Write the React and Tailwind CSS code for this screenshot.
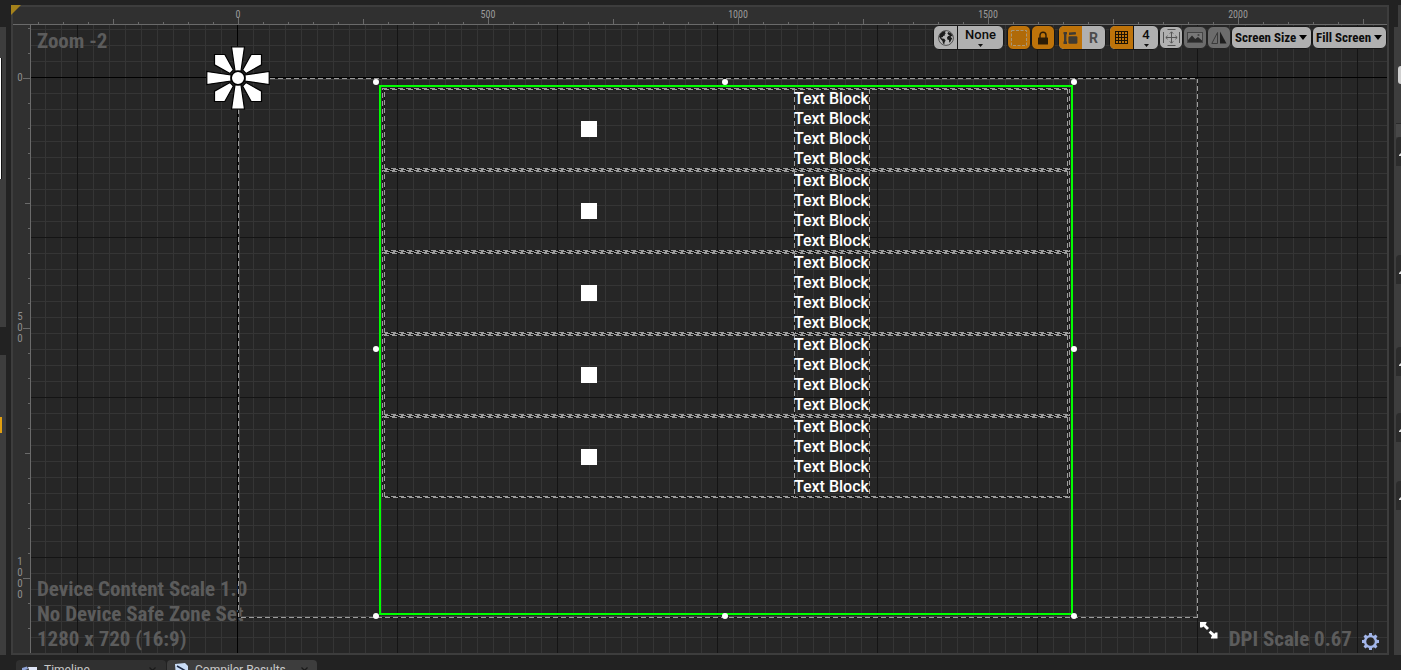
import { useLayoutEffect, useRef, useState } from "react";

const DASHED =
  "bg-[repeating-linear-gradient(90deg,#9c9c9c_0_5px,#161616_5px_8px),repeating-linear-gradient(-90deg,#9c9c9c_0_5px,#161616_5px_8px),repeating-linear-gradient(0deg,#9c9c9c_0_5px,#161616_5px_8px),repeating-linear-gradient(180deg,#9c9c9c_0_5px,#161616_5px_8px)] bg-[length:100%_1px,100%_1px,1px_100%,1px_100%] bg-[position:0_0,0_100%,0_0,100%_0] bg-no-repeat";
const DASHED_SIDES =
  "bg-[repeating-linear-gradient(180deg,#9c9c9c_0_5px,#161616_5px_8px),repeating-linear-gradient(180deg,#9c9c9c_0_5px,#161616_5px_8px)] bg-[length:1px_100%,1px_100%] bg-[position:0_0,100%_0] bg-no-repeat";
const GRID =
  "bg-[#262626] bg-[linear-gradient(#000,#000),linear-gradient(#000,#000),linear-gradient(90deg,#141414_1px,transparent_1px),linear-gradient(#141414_1px,transparent_1px),linear-gradient(90deg,#353535_1px,transparent_1px),linear-gradient(#353535_1px,transparent_1px)] bg-[length:1px_100%,100%_1px,160px_160px,160px_160px,16px_16px,16px_16px] bg-[position:206px_0,0_52px,46px_52px,46px_52px,14px_4px,14px_4px] [background-repeat:no-repeat,no-repeat,repeat,repeat,repeat,repeat]";
const CONDENSED = "font-['Roboto_Condensed','Roboto',sans-serif]";

const TICK_GAP = 25;

function tickLength(i) {
  if (i % 10 === 0) return 7;
  if (i % 5 === 0) return 5;
  return 2;
}

// Tick indexes whose position, measured from `origin`, lies between `start` and `end`.
function ticksBetween(origin, start, end) {
  const ticks = [];
  for (let i = Math.ceil((start - origin) / TICK_GAP); origin + i * TICK_GAP < end; i++) ticks.push(i);
  return ticks;
}

function useSize() {
  const ref = useRef(null);
  const [size, setSize] = useState({ width: 0, height: 0 });
  useLayoutEffect(() => {
    const measure = () => {
      const box = ref.current.getBoundingClientRect();
      setSize({ width: box.width, height: box.height });
    };
    measure();
    window.addEventListener("resize", measure);
    return () => window.removeEventListener("resize", measure);
  }, []);
  return [ref, size];
}

function TopRuler() {
  const [ref, { width }] = useSize();
  return (
    <svg ref={ref} className={`block h-[18px] w-full border-b border-[#6a6a6a] text-[10px] ${CONDENSED}`} aria-label="Horizontal ruler">
      {ticksBetween(225, 19, width).map((i) => {
        const x = 225 + i * TICK_GAP;
        const len = tickLength(i);
        return (
          <g key={i}>
            <rect x={x} y={17 - len} width="1" height={len} fill="#6a6a6a" />
            {i % 10 === 0 && (
              <text x={x} y="11" textAnchor="middle" fill="#9a9a9a">
                {i * 50}
              </text>
            )}
          </g>
        );
      })}
    </svg>
  );
}

function LeftRuler() {
  const [ref, { height }] = useSize();
  return (
    <svg ref={ref} className={`block h-full w-[18px] shrink-0 border-r border-[#6a6a6a] text-[11px] ${CONDENSED}`} aria-label="Vertical ruler">
      {ticksBetween(53, 0, height).map((i) => {
        const y = 53 + i * TICK_GAP;
        const len = tickLength(i);
        const digits = String(i * 50).split("");
        return (
          <g key={i}>
            <rect x={17 - len} y={y} width={len} height="1" fill="#6a6a6a" />
            {i % 10 === 0 &&
              digits.map((d, k) => (
                <text key={k} x="7" y={y + 3 + Math.round((k - (digits.length - 1) / 2) * 11)} textAnchor="middle" fill="#8c8c8c">
                  {d}
                </text>
              ))}
          </g>
        );
      })}
    </svg>
  );
}

function AnchorFlower() {
  return (
    <svg className="absolute -left-8 -top-8 size-16" viewBox="-32 -32 64 64" aria-label="Anchor">
      <g fill="#fff" stroke="#000" strokeWidth="1.2">
        {[0, 90, 180, 270].map((a) => (
          <g key={a} transform={`rotate(${a})`}>
            <path d="M-6.5-31.2H6.5L3-7H-3Z" />
            <path d="M-23.5-23.5H-13.2L-4.6-8L-8-4.6L-23.5-13.2Z" />
          </g>
        ))}
        <circle r="6.8" strokeWidth="1.6" />
      </g>
    </svg>
  );
}

function Handle({ className }) {
  return <span className={`absolute size-[6px] rounded-full bg-white ${className}`} />;
}

function ListRow() {
  return (
    <div className={`p-px ${DASHED}`}>
      <div className={`mx-px flex h-20 ${DASHED}`}>
        <div className="flex flex-[410] items-center justify-center">
          <div className="size-4 bg-white" />
        </div>
        <div className={`w-[76px] whitespace-nowrap text-base/5 font-medium text-white ${DASHED_SIDES}`}>
          <p>Text Block</p>
          <p>Text Block</p>
          <p>Text Block</p>
          <p>Text Block</p>
        </div>
        <div className="flex-[198]" />
      </div>
    </div>
  );
}

function DesignSurface() {
  return (
    <div className={`absolute left-[207px] top-[53px] h-[540px] w-[960px] p-px ${DASHED}`}>
      <div className="h-full border border-[#454545]" />
      <div className="absolute left-[141px] top-[7px] h-[530px] w-[694px] border-2 border-[#00ff00] px-px pt-px">
        {[0, 1, 2, 3, 4].map((n) => (
          <ListRow key={n} />
        ))}
      </div>
      <Handle className="left-[135px] top-px" />
      <Handle className="left-[484px] top-px" />
      <Handle className="left-[833px] top-px" />
      <Handle className="left-[135px] top-[268px]" />
      <Handle className="left-[833px] top-[268px]" />
      <Handle className="left-[135px] top-[535px]" />
      <Handle className="left-[484px] top-[535px]" />
      <Handle className="left-[833px] top-[535px]" />
      <AnchorFlower />
      <svg className="absolute left-[961px] top-[542px] size-5" viewBox="0 0 20 20" aria-label="Resize">
        <path d="M1 2H7.5V3L6.5 4.5L10 8L8 10L4.5 6.5L3 7.5H1Z" fill="#fff" />
        <path d="M18.5 18.5H12V17.5L13 15.8L9.6 12.4L11.6 10.4L15.2 13.8L16.5 12.5H18.5Z" fill="#fff" />
      </svg>
    </div>
  );
}

function Caret() {
  return (
    <svg className="h-[3px] w-[5px]" viewBox="0 0 5 3">
      <path d="M0 0H5L2.5 3Z" fill="#111" />
    </svg>
  );
}

const BUTTON = "flex items-center justify-center";
const GROUP = "flex h-[25px] overflow-hidden rounded-md border border-[#161616]";

function DropDown({ label, options, className }) {
  return (
    <label className={`relative block h-[23px] ${className}`}>
      <select
        aria-label={label}
        className={`h-full w-full appearance-none rounded-md border border-[#161616] bg-[#b0b0b0] pl-[3px] text-[13px] font-bold text-[#0c0c0c] outline-none ${CONDENSED}`}
      >
        {options.map((o) => (
          <option key={o}>{o}</option>
        ))}
      </select>
      <svg className="pointer-events-none absolute right-[5px] top-[9px] h-[5px] w-2" viewBox="0 0 8 5">
        <path d="M0 0H8L4 5Z" fill="#000" />
      </svg>
    </label>
  );
}

function Toolbar() {
  return (
    <div className="absolute right-0 top-0 flex items-center gap-[3px] text-[13px] font-medium text-[#0c0c0c]">
      <div className={`w-[71px] bg-[#b0b0b0] ${GROUP}`}>
        <button aria-label="Localization preview" className={`w-6 border-r border-[#161616] ${BUTTON}`}>
          <svg className="size-4" viewBox="0 0 16 16">
            <circle cx="8" cy="8" r="7.4" fill="#b8b8b8" stroke="#444" strokeWidth=".9" />
            <path d="M1 6.5L2.4 3.4L5 1.4L7.6 1L7 2.4L8 3.2L6.6 4L7.2 5.2L5.2 6L4.8 7.2L3.4 7L3.8 8.4L6.2 8.8L7.6 10.4L6.6 12.2L6.2 14.4L5 13.2L4.4 11L2.6 9Z" fill="#1c1c1c" />
            <path d="M10.2 2L12.6 3L14.4 5.2L14.6 6.4L13.4 6L12.6 7L14.2 8.2L13 10.6L12 12.4L11.2 12.2L11 10L9.4 9.4L9 7.4L10.2 6L12 5.6L10.4 4.8L9.4 3.4Z" fill="#1c1c1c" />
          </svg>
        </button>
        <button className="flex flex-1 flex-col items-center justify-center gap-[2px]">
          <span className="leading-[14px]">None</span>
          <Caret />
        </button>
      </div>
      <div className="flex">
        <button aria-label="Toggle outlines" className={`h-[25px] w-6 rounded-md border border-[#161616] bg-[#be730a] ${BUTTON}`}>
          <svg className="size-4" viewBox="0 0 16 16">
            <rect x=".5" y=".5" width="15" height="15" fill="#b06a08" stroke="#a89778" strokeDasharray="3 1.5" />
          </svg>
        </button>
        <button aria-label="Respect locks" className={`h-[25px] w-6 rounded-md border border-[#161616] bg-[#be730a] ${BUTTON}`}>
          <svg className="h-[14px] w-3" viewBox="0 0 12 14">
            <rect x="1" y="6.5" width="10" height="7" rx=".5" fill="#2c1c06" />
            <path d="M3 7V4.2A3 3 0 0 1 9 4.2V7" fill="none" stroke="#2c1c06" strokeWidth="1.4" />
          </svg>
        </button>
      </div>
      <div className={`w-12 bg-[#b0b0b0] ${GROUP}`}>
        <button aria-label="Layout transform" className={`flex-1 bg-[#be730a] ${BUTTON}`}>
          <svg className="h-3 w-[15px]" viewBox="0 0 15 12" fill="#3f3a33">
            <path d="M.5 0H4V2.2H3.4V9.6H4V12H.5V9.6H1V2.2H.5Z" />
            <path d="M6 .6L12.5 0Q13.4 1 12.8 2.4L6 3Z" />
            <rect x="5.4" y="4.2" width="9" height="7.6" rx="1.2" />
          </svg>
        </button>
        <button aria-label="Render transform" className={`flex-1 text-sm font-bold text-[#4c4c4c] ${BUTTON}`}>
          R
        </button>
      </div>
      <div className="flex items-center">
        <div className={`w-[50px] bg-[#b0b0b0] ${GROUP}`}>
          <button aria-label="Grid snapping" className={`w-6 border-r border-[#161616] bg-[#be730a] ${BUTTON}`}>
            <svg className="size-[13px]" viewBox="0 0 13 13" shapeRendering="crispEdges">
              <path d="M.5 0V13M3.5 0V13M6.5 0V13M9.5 0V13M12.5 0V13M0 .5H13M0 3.5H13M0 6.5H13M0 9.5H13M0 12.5H13" stroke="#1c1204" />
            </svg>
          </button>
          <button aria-label="Snap size 4" className="flex flex-1 flex-col items-center justify-center gap-[2px]">
            <span className="leading-[14px]">4</span>
            <Caret />
          </button>
        </div>
        <button aria-label="Zoom to fit" className={`h-[23px] w-6 rounded-md border border-[#161616] bg-[#b0b0b0] ${BUTTON}`}>
          <svg className="size-[17px]" viewBox="0 0 17 17" fill="none" stroke="#555">
            <path d="M8.5 3V14M3 8.5H14M4.5 .5H12.5M4.5 16.5H12.5M.5 3V14M16.5 3V14" />
            <path d="M6.8 4.6L8.5 2.8L10.2 4.6M6.8 12.4L8.5 14.2L10.2 12.4M4.6 6.8L2.8 8.5L4.6 10.2M12.4 6.8L14.2 8.5L12.4 10.2" />
          </svg>
        </button>
        <button aria-label="Preview background" className={`h-[23px] w-6 rounded-md border border-[#242424] bg-[#6c6c6c] ${BUTTON}`}>
          <svg className="h-[11px] w-4" viewBox="0 0 16 11">
            <rect x=".5" y=".5" width="15" height="10" fill="#787878" stroke="#444" />
            <path d="M1 10V8L5 3.5L8.2 7L11 5L15 8.5V10Z" fill="#2b2b2b" />
            <circle cx="11.5" cy="3" r="1.1" fill="#444" />
          </svg>
        </button>
        <button aria-label="Flow direction" className={`h-[23px] w-6 rounded-md border border-[#242424] bg-[#6c6c6c] ${BUTTON}`}>
          <svg className="h-[13px] w-4" viewBox="0 0 16 13">
            <path d="M6.5 1.5V12.5H.8Z" fill="none" stroke="#3a3a3a" />
            <path d="M9 .5V12.5H15.5Z" fill="#1e1e1e" />
          </svg>
        </button>
        <DropDown label="Screen size" className="w-[81px]" options={["Screen Size", "1280 x 720", "1920 x 1080"]} />
        <DropDown label="Screen fill mode" className="w-[75px]" options={["Fill Screen", "Custom", "Desired"]} />
      </div>
    </div>
  );
}

function Gear() {
  return (
    <svg className="size-[17px]" viewBox="-8 -8 16 16">
      <g fill="#a3b6ea">
        {[0, 45, 90, 135, 180, 225, 270, 315].map((a) => (
          <path key={a} d="M-1.7-5L-1.3-8H1.3L1.7-5Z" transform={`rotate(${a})`} />
        ))}
      </g>
      <circle r="5.1" fill="none" stroke="#a3b6ea" strokeWidth="2.2" />
    </svg>
  );
}

function Designer() {
  return (
    <main className="relative flex min-w-0 flex-1 flex-col border-2 border-[#3d3d3d] bg-[#303030]">
      <svg className="absolute -left-[2px] -top-[2px] size-[10px]" viewBox="0 0 10 10">
        <path d="M0 0H10L0 10Z" fill="#a5821b" />
      </svg>
      <TopRuler />
      <div className="flex min-h-0 flex-1">
        <LeftRuler />
        <div className={`relative min-w-0 flex-1 overflow-hidden ${GRID}`}>
          <div className={`absolute left-[6px] top-1 text-[21px]/[25px] font-bold text-[#5c5c5c] ${CONDENSED}`}>Zoom -2</div>
          <div className={`absolute bottom-px left-[6px] text-[21px]/[25px] font-bold text-[#5c5c5c] ${CONDENSED}`}>
            <p>Device Content Scale 1.0</p>
            <p>No Device Safe Zone Set</p>
            <p>1280 x 720 (16:9)</p>
          </div>
          <DesignSurface />
          <div className={`absolute bottom-px right-2 flex items-center gap-[10px] text-[21px]/[25px] font-bold text-[#5c5c5c] ${CONDENSED}`}>
            DPI Scale 0.67
            <button aria-label="DPI settings" className="pt-[3px]">
              <Gear />
            </button>
          </div>
          <Toolbar />
        </div>
      </div>
    </main>
  );
}

function LeftDock() {
  return (
    <aside className="flex w-[6px] shrink-0 flex-col pt-[22px]">
      <div className="h-[300px] bg-[#3d3d3d] pt-[31px]">
        <div className="h-[121px] w-[2px] border-r border-[#111] bg-white" />
      </div>
      <div className="h-7" />
      <div className="flex-1 bg-[#3d3d3d] pt-[62px]">
        <div className="h-4 w-[2px] bg-[#e2a010]" />
      </div>
    </aside>
  );
}

function Section({ className }) {
  return (
    <div className={`rounded-tl-sm bg-[#2c2c2c] pl-[3px] pt-4 ${className}`}>
      <svg className="block h-[3px] w-[2px]" viewBox="0 0 2 3">
        <path d="M2 0V3H0V2Z" fill="#ddd" />
      </svg>
    </div>
  );
}

function RightDock() {
  return (
    <aside className="flex w-[7px] shrink-0 flex-col">
      <div className="ml-1 h-[22px] bg-[#3d3d3d]" />
      <div className="flex flex-1 flex-col bg-[#3d3d3d] pl-[2px] pt-[39px]">
        <div className="ml-[2px] h-[18px] rounded-l-sm bg-[#cfcfcf]" />
        <div className="mt-[39px] h-[14px] border-t border-[#2a2a2a] bg-[#484848]" />
        <Section className="h-[29px]" />
        <Section className="mt-[89px] h-[29px]" />
        <Section className="mt-[63px] h-[29px]" />
        <Section className="mt-[37px] h-[29px]" />
        <Section className="mt-[39px] h-[29px]" />
      </div>
    </aside>
  );
}

function TabClose() {
  return (
    <svg className="mt-[7px] size-[7px]" viewBox="0 0 7 7">
      <path d="M.5 .5L6.5 6.5M6.5 .5L.5 6.5" stroke="#1a1a1a" strokeWidth="1.3" />
    </svg>
  );
}

function BottomTabs() {
  return (
    <nav className="flex h-[15px] shrink-0 gap-px overflow-hidden pl-4 pt-[5px] text-xs/[14px] text-[#c8c8c8]">
      <button className="flex h-6 w-[150px] items-start rounded-t-sm bg-[#303030] pl-[6px] pr-[10px]">
        <svg className="mr-[6px] mt-[6px] h-[14px] w-4" viewBox="0 0 16 14">
          <path d="M0 2L5 0.5L6 3L0 5Z" fill="#8fa3d6" />
          <path d="M6 1H15V4H7Z" fill="#dfe6f7" />
          <rect x="2" y="4" width="13" height="9" fill="#7c90c4" />
        </svg>
        <span className="flex-1 pt-[3px] text-left">Timeline</span>
        <TabClose />
      </button>
      <button className="flex h-6 w-[150px] items-start rounded-t-sm bg-[#3d3d3d] pl-2 pr-[9px]">
        <svg className="mr-[6px] mt-[3px] size-[14px]" viewBox="0 0 14 14">
          <path d="M0 1L10 0L13 3V14H1Z" fill="#c9dcf6" />
          <path d="M2 3L9 7L3 11" fill="none" stroke="#1d2a44" strokeWidth="1.6" />
        </svg>
        <span className="flex-1 pt-[3px] text-left">Compiler Results</span>
        <TabClose />
      </button>
    </nav>
  );
}

export default function App() {
  return (
    <div className="flex h-screen flex-col overflow-hidden bg-[#222222] font-['Roboto',sans-serif]">
      <div className="flex min-h-0 flex-1 gap-[5px] pt-[5px]">
        <LeftDock />
        <Designer />
        <RightDock />
      </div>
      <BottomTabs />
    </div>
  );
}
